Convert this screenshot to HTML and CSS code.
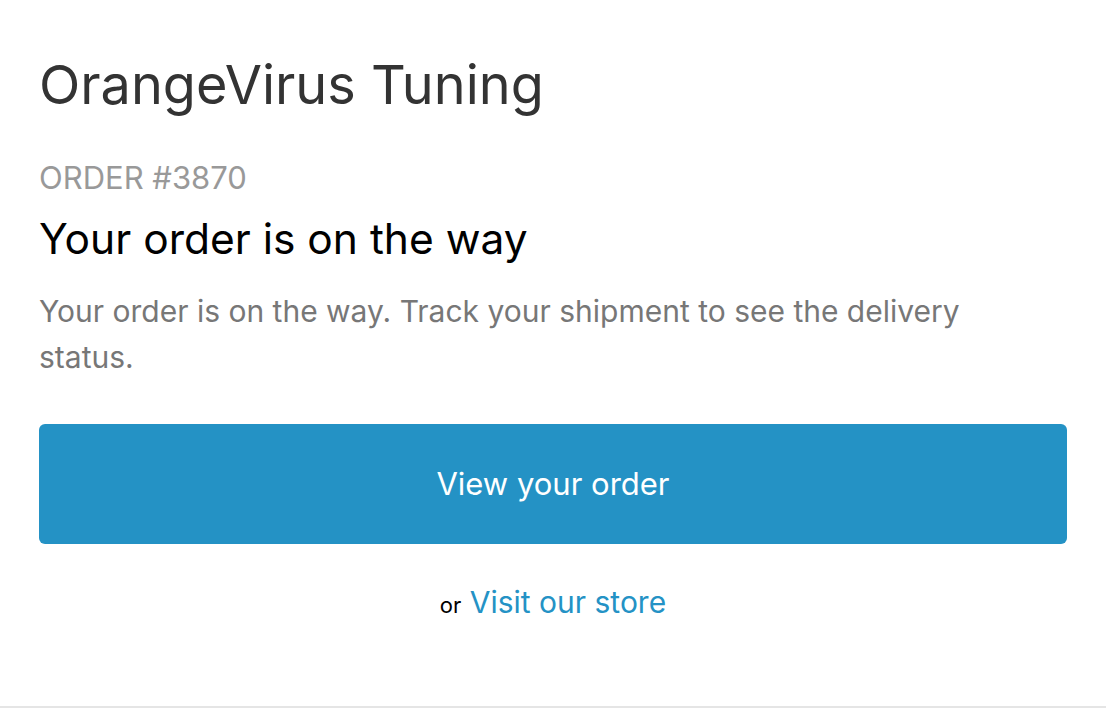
FILE: index.html
```html
<!DOCTYPE html>
<html lang="en">
<head>
    <meta charset="UTF-8">
    <meta name="viewport" content="width=device-width, initial-scale=1.0">
    <title>Your order is on the way</title>
    <link rel="stylesheet" href="styles.css">
</head>
<body>
    <div class="email">
        <div class="shop-header">
            <h1 class="shop-name">OrangeVirus Tuning</h1>
        </div>

        <div class="content">
            <span class="order-number">ORDER #3870</span>
            <h2>Your order is on the way</h2>
            <p>Your order is on the way. Track your shipment to see the delivery status.</p>

            <div class="actions">
                <a href="#" class="button">View your order</a>
                <div class="secondary-action">
                    <span>or</span> <a href="#">Visit our store</a>
                </div>
            </div>
        </div>
    </div>
</body>
</html>
```

FILE: styles.css
```css
* {
    margin: 0;
    padding: 0;
    box-sizing: border-box;
}

body {
    font-family: Inter, 'Noto Sans', 'Liberation Sans', sans-serif;
    background: #fff;
    color: #333;
}

.email {
    padding: 0 39px 36px;
    border-bottom: 2px solid #e5e5e5;
    min-height: 708px;
}

.shop-header {
    padding-top: 49px;
}

.shop-name {
    font-size: 54px;
    font-weight: 400;
    line-height: 72px;
    color: #333;
}

.content {
    margin-top: 39px;
}

.order-number {
    display: block;
    font-size: 31px;
    line-height: 36px;
    color: #999;
}

h2 {
    font-size: 42.5px;
    font-weight: 400;
    line-height: 56px;
    color: #000;
    margin-top: 15px;
}

p {
    font-size: 30px;
    line-height: 46px;
    color: #777;
    margin-top: 21px;
    max-width: 960px;
}

.actions {
    margin-top: 44px;
}

.button {
    display: block;
    height: 120px;
    line-height: 120px;
    background: #2492c5;
    border-radius: 6px;
    color: #fff;
    text-align: center;
    text-decoration: none;
    font-size: 31px;
}

.secondary-action {
    text-align: center;
    margin-top: 38px;
    font-size: 30px;
    line-height: 40px;
}

.secondary-action span {
    font-size: 22px;
    color: #000;
}

.secondary-action a {
    color: #2492c5;
    text-decoration: none;
}
```
